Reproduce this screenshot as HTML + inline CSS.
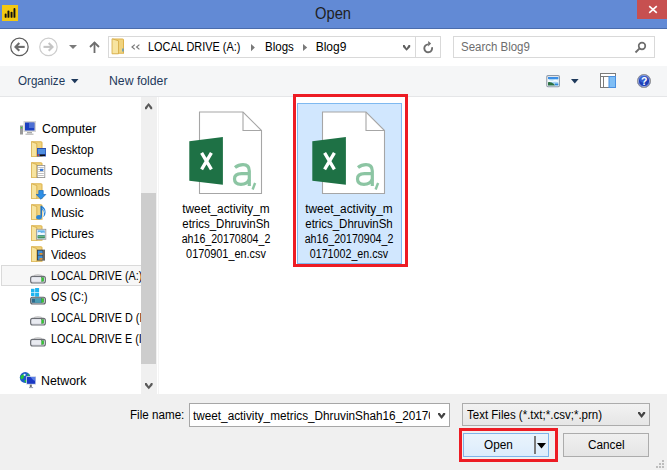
<!DOCTYPE html>
<html><head><meta charset="utf-8">
<style>
*{box-sizing:border-box;margin:0;padding:0}
html,body{width:667px;height:470px;overflow:hidden;background:#F0F0F0;font-family:"Liberation Sans",sans-serif;font-size:12px;color:#000}
.a{position:absolute}
.t{position:absolute;white-space:nowrap;line-height:14px}
svg{position:absolute;overflow:visible}
</style></head><body>
<div class="a" style="left:0;top:0;width:667px;height:29px;background:#628AD5;border-bottom:1px solid #4A6CAC"></div>
<div class="a" style="left:2px;top:5px;width:16px;height:16px;background:#F2C811"></div>
<svg style="left:2px;top:5px" width="16" height="16"><g fill="#111"><rect x="2.7" y="8.6" width="1.9" height="4.2" rx=".9"/><rect x="5.5" y="5.6" width="1.9" height="7.2" rx=".9"/><rect x="8.6" y="6.7" width="1.9" height="6.1" rx=".9"/><rect x="11.5" y="3" width="1.9" height="9.8" rx=".9"/></g></svg>
<div class="a" style="left:637px;top:0;width:30px;height:19px;background:#C75050"></div>
<svg style="left:637px;top:0" width="30" height="19"><g stroke="#fff" stroke-width="1.6"><line x1="12.2" y1="6.2" x2="19.8" y2="12.8"/><line x1="19.8" y1="6.2" x2="12.2" y2="12.8"/></g></svg>
<div class="t" style="left:314.8px;top:5.2px;color:#1f1f1f;font-size:15.6px;transform:scaleX(0.945);transform-origin:0 0;line-height:18px">Open</div>
<div class="a" style="left:0;top:29px;width:667px;height:37px;background:#fff"></div>
<svg style="left:10px;top:37px" width="20" height="20"><circle cx="9.45" cy="9.9" r="8.7" fill="none" stroke="#5d5d5d" stroke-width="1.2"/><g stroke="#6d6d6d" stroke-width="2.1" fill="none"><line x1="5.5" y1="9.9" x2="14.7" y2="9.9"/><polyline points="9.3,6.1 5.5,9.9 9.3,13.7"/></g></svg>
<svg style="left:39px;top:37px" width="20" height="20"><circle cx="9.45" cy="9.9" r="8.7" fill="none" stroke="#cdcdcd" stroke-width="1.2"/><g stroke="#c4c4c4" stroke-width="2.1" fill="none"><line x1="4.5" y1="9.9" x2="13.5" y2="9.9"/><polyline points="9.7,6.1 13.5,9.9 9.7,13.7"/></g></svg>
<svg style="left:69px;top:45px" width="8" height="4"><polygon points="0,0 8,0 4,4" fill="#7a7a7a"/></svg>
<svg style="left:89px;top:41px" width="11" height="12"><g stroke="#6d6d6d" stroke-width="1.8" fill="none"><line x1="5.5" y1="1.5" x2="5.5" y2="12"/><polyline points="1,6 5.5,1.5 10,6"/></g></svg>
<div class="a" style="left:108px;top:36px;width:333px;height:22px;border:1px solid #D9D9D9;background:#fff"></div>
<div class="a" style="left:415px;top:37px;width:1px;height:20px;background:#D9D9D9"></div>
<svg style="left:111px;top:37.5px" width="15" height="16"><path d="M1.5,0.5 L11.5,0.5 Q13,0.5 13,2 L13,15.8 L1.5,15.8Z" fill="#DDB24A"/><path d="M2.5,1.5 L12,1.5 L12,14.8 L2.5,14.8Z" fill="#F0D37E"/><path d="M1,0.8 L7.5,2.8 L7.5,15.8 L1,15.8Z" fill="#F7E4A0" stroke="#D3A843" stroke-width=".8"/><rect x="11.3" y="10.5" width="1.2" height="3" fill="#3A8FD6"/></svg>
<svg style="left:131px;top:44px" width="10" height="7"><g fill="none" stroke="#7a7a7a" stroke-width="1.2"><polyline points="3.8,0.6 1,3 3.8,5.4"/><polyline points="8.4,0.6 5.6,3 8.4,5.4"/></g></svg>
<svg style="left:251px;top:43.8px" width="5" height="8"><polygon points="0,0 3.9,3.6 0,7.2" fill="#7a7a7a"/></svg>
<svg style="left:302.7px;top:43.9px" width="5" height="8"><polygon points="0,0 4.2,3.55 0,7.1" fill="#7a7a7a"/></svg>
<svg style="left:403px;top:45.1px" width="8" height="7"><polygon points="0,0 1.6,0 3.6,3.3 5.6,0 7.2,0 7.2,1.9 3.6,5.8 0,1.9" fill="#606060"/></svg>
<svg style="left:418px;top:38px" width="20" height="18"><path d="M13.97,9.29 A3.9,3.9 0 1 1 10.2,6.4" fill="none" stroke="#6d6d6d" stroke-width="1.9"/><polygon points="10.2,2.9 13.1,5.6 10.2,8.5" fill="#6d6d6d"/></svg>
<div class="a" style="left:453px;top:36px;width:202px;height:22px;border:1px solid #D9D9D9;background:#fff"></div>
<svg style="left:634px;top:41px" width="13" height="13"><circle cx="8" cy="5" r="3.3" fill="none" stroke="#6d6d6d" stroke-width="1.7"/><line x1="5.6" y1="7.4" x2="1.5" y2="11.5" stroke="#6d6d6d" stroke-width="1.9"/></svg>
<div class="t" style="left:147.6px;top:40px;transform:scaleX(0.91);transform-origin:0 0">LOCAL DRIVE (A:)</div>
<div class="t" style="left:264.6px;top:40px;transform:scaleX(0.96);transform-origin:0 0">Blogs</div>
<div class="t" style="left:315.7px;top:40px">Blog9</div>
<div class="t" style="left:461px;top:40px;color:#6d6d6d;transform:scaleX(0.956);transform-origin:0 0">Search Blog9</div>
<div class="a" style="left:0;top:66px;width:667px;height:31px;background:#F5F6F7;border-bottom:1px solid #E5E6E8"></div>
<svg style="left:70.7px;top:78.9px" width="8" height="5"><polygon points="0,0 7.5,0 3.75,4.2" fill="#1E395B"/></svg>
<svg style="left:546px;top:75px" width="14" height="12"><rect x="0.8" y="0.6" width="12.6" height="11.2" rx="1.2" fill="#fff" stroke="#8d99a8" stroke-width="1.1"/><rect x="2" y="2" width="10.3" height="8.4" fill="#a8d4f4"/><rect x="2" y="2" width="10.3" height="2" fill="#3a8ee6"/><path d="M2,4 Q5,6.5 8,5 Q10,4.2 12.3,5.5 L12.3,7 Q8,6 2,8Z" fill="#f4fbff"/><path d="M2,10.4 L2,7.2 Q5,6.6 8,9 L9,10.4Z" fill="#2c7040"/><rect x="9" y="8.6" width="3.3" height="1.8" fill="#2e88d8"/></svg>
<svg style="left:570.7px;top:78.8px" width="8" height="5"><polygon points="0,0 7.6,0 3.8,4.4" fill="#1E395B"/></svg>
<svg style="left:600px;top:73px" width="16" height="15"><rect x="0.5" y="0.5" width="15" height="14" fill="#fff" stroke="#7b7b7b"/><line x1="0.5" y1="3.5" x2="15.5" y2="3.5" stroke="#7b7b7b"/><line x1="3.5" y1="3.5" x2="3.5" y2="14.5" stroke="#7b7b7b"/><rect x="9" y="3.5" width="6.5" height="11" fill="#7fbef5" stroke="#4a90e0"/></svg>
<svg style="left:637px;top:74px" width="14" height="14"><circle cx="7" cy="7" r="6.6" fill="#1d3fb8" stroke="#9a9a9a" stroke-width="1"/><circle cx="7" cy="7" r="5.6" fill="none" stroke="#e8e8e8" stroke-width=".6"/><circle cx="6" cy="5" r="3.4" fill="#4a7ee8" opacity=".55"/><text x="7.1" y="10.8" font-family="Liberation Sans" font-weight="bold" font-size="10.5" fill="#fff" text-anchor="middle">?</text></svg>
<div class="t" style="left:18.4px;top:74px;color:#1E395B;transform:scaleX(0.967);transform-origin:0 0">Organize</div>
<div class="t" style="left:109.2px;top:74px;color:#1E395B;transform:scaleX(1.02);transform-origin:0 0">New folder</div>
<div class="a" style="left:0;top:97px;width:667px;height:297px;background:#fff"></div>
<div class="a" style="left:141px;top:97px;width:16px;height:297px;background:#F0F0F0"></div>
<div class="a" style="left:141px;top:193px;width:15px;height:171px;background:#CDCDCD"></div>
<div class="a" style="left:158px;top:97px;width:1px;height:297px;background:#F4F4F4"></div>
<svg style="left:144.9px;top:102.8px" width="8" height="7"><polygon points="0,4.3 3.6,0 7.2,4.3 7.2,6.3 5.6,6.3 3.6,3 1.6,6.3 0,6.3" fill="#5a5a5a"/></svg>
<svg style="left:144.7px;top:382.9px" width="8" height="7"><polygon points="0,0 1.6,0 3.8,3.3 6,0 7.6,0 7.6,2 3.8,6.3 0,2" fill="#5a5a5a"/></svg>
<svg width="0" height="0" style="position:absolute"><defs>
<symbol id="fold" viewBox="0 0 16 16"><path d="M0.7,0.3 L10,0.3 Q11.5,0.3 11.5,1.8 L11.5,15.8 L0.7,15.8Z" fill="#DDB24A"/><path d="M1.7,1.3 L10.5,1.3 L10.5,14.8 L1.7,14.8Z" fill="#F0D37E"/><path d="M0.4,0.6 L5.8,2.6 L5.8,15.8 L0.4,15.8Z" fill="#F7E4A0" stroke="#D3A843" stroke-width=".8"/></symbol>
<symbol id="drive" viewBox="0 0 16 10"><path d="M3.2,2.6 Q4,0.6 8,0.6 Q12,0.6 12.8,2.6Z" fill="#f2f2f2" stroke="#b4b4b4" stroke-width=".7"/><rect x="0.6" y="2.4" width="14.8" height="6.6" rx="2" fill="#dcdee6" stroke="#6b6e74" stroke-width="1.1"/><rect x="2" y="3.6" width="9.5" height="3.6" fill="#e9ebf1"/><rect x="11.7" y="3.7" width="2" height="3.6" fill="#2ecf2e" stroke="#3a8a3a" stroke-width=".5"/></symbol>
<symbol id="xl" viewBox="0 0 76 86"><path d="M11.5,2 L55,2 L73.5,20.5 L73.5,83.5 L11.5,83.5Z" fill="#fff" stroke="#a6a6a6" stroke-width="1.1"/><path d="M55,2 L55,20.5 L73.5,20.5" fill="none" stroke="#a6a6a6" stroke-width="1.1"/><path d="M1.3,31.3 L34.9,26.9 L34.9,74.8 L1.3,70.8Z" fill="#1E7145"/><path d="M13.6,42.8 L23.4,59.4 M23.4,42.8 L13.6,59.4" stroke="#fff" stroke-width="3.3"/><g fill="none" stroke="#8CC5A3" stroke-width="3.2"><path d="M47,57.6 Q50.5,54.7 55,54.7 Q61.3,54.7 61.3,61 L61.3,75.9"/><path d="M61.3,63.7 L53.5,63.7 Q46.5,63.7 46.5,69 Q46.5,74.3 53,74.3 Q59,74.3 61.3,69.5"/></g><path d="M67.1,73 L64.6,79.5" stroke="#8CC5A3" stroke-width="2.4"/></symbol>
</defs></svg>
<div class="a" style="left:1px;top:265px;width:140px;height:21px;background:#F7F7F7;border:1px solid #DADADA;border-right:none"></div>
<div class="a" style="left:0;top:97px;width:141px;height:297px;overflow:hidden">
<svg style="left:20px;top:24px" width="16" height="14"><rect x="0" y="4.5" width="3" height="9" fill="#9a9a9a"/><rect x="0.8" y="6" width="1.4" height="1.4" fill="#3c3"/><rect x="3.5" y="0" width="12.5" height="11" fill="#d6d6d6"/><rect x="5" y="1.5" width="9.5" height="8" fill="#1a3fc0"/><rect x="9" y="2" width="5" height="5" fill="#6f8fe0" opacity=".6"/><rect x="7" y="11" width="5" height="1.5" fill="#aaa"/><rect x="5.5" y="12.5" width="8" height="1.5" fill="#c4c4c4"/></svg>
<svg style="left:31px;top:44px" width="16" height="16"><use href="#fold"/><g transform="translate(-1 0)"><rect x="7" y="7" width="9" height="8.5" fill="#2a4fb0"/><rect x="7.8" y="8" width="7.5" height="5" fill="#4f8ee0"/><rect x="10" y="13.6" width="5" height="1.4" fill="#111"/><rect x="7.5" y="13.3" width="1.6" height="1.6" fill="#e05020"/></g></svg>
<svg style="left:31px;top:65px" width="16" height="16"><use href="#fold"/><g transform="translate(-1 0)"><rect x="7.2" y="3.4" width="7.6" height="12.2" fill="#fff" stroke="#8c8c8c" stroke-width=".8"/><g stroke="#b0b0b0" stroke-width=".8"><line x1="8.2" y1="5.5" x2="13.8" y2="5.5"/><line x1="8.2" y1="7.5" x2="13.8" y2="7.5"/><line x1="8.2" y1="9.5" x2="13.8" y2="9.5"/><line x1="8.2" y1="11.5" x2="13.8" y2="11.5"/><line x1="8.2" y1="13.5" x2="13.8" y2="13.5"/></g><rect x="10" y="6.8" width="3.2" height="2.2" fill="#3a7ad8"/></g></svg>
<svg style="left:31px;top:86px" width="16" height="16"><use href="#fold"/><g transform="translate(-1 0)"><path d="M8.8,7.5 L13.2,7.5 L13.2,11.5 L15.8,11.5 L11,16.3 L6.2,11.5 L8.8,11.5Z" fill="#2E8FE6" stroke="#1766b8" stroke-width=".7"/></g></svg>
<svg style="left:31px;top:107px" width="16" height="16"><use href="#fold"/><path d="M10.2,1.8 Q14.6,3.6 14.6,8.2 Q14.6,11.2 12.6,13 L12.3,12.6 Q13.2,10.5 12.8,8.5 Q12.3,6.5 10.9,5.8 L10.9,13" fill="#2a86d8"/><path d="M10.2,1.8 L10.2,13" stroke="#1f6fc0" stroke-width="1.5"/><ellipse cx="8" cy="13.2" rx="2.8" ry="2.2" fill="#2a86d8"/><path d="M11.6,4.6 Q13.3,6 13.3,8.5" stroke="#e8f4ff" stroke-width=".8" fill="none"/></svg>
<svg style="left:31px;top:128px" width="16" height="16"><use href="#fold"/><g transform="translate(-1 0)"><rect x="6.6" y="4.3" width="9.2" height="10" fill="#fff" stroke="#9a9a9a" stroke-width=".9"/><rect x="7.6" y="5.3" width="7.2" height="8" fill="#62b2ea"/><path d="M7.6,7.5 Q10,6.5 11.5,8 Q13,7 14.8,8 L14.8,10 L7.6,10Z" fill="#eef8ff"/><rect x="7.6" y="10.4" width="7.2" height="2.9" fill="#3d8a55"/><rect x="7.6" y="11.4" width="7.2" height=".7" fill="#8ccfa0"/></g></svg>
<svg style="left:31px;top:149px" width="16" height="16"><use href="#fold"/><g transform="translate(-1 0)"><rect x="7" y="3.7" width="8" height="10.8" fill="#3b3b3b"/><rect x="7.8" y="4.6" width="4.8" height="4.3" fill="#3d8fd8"/><rect x="7.8" y="9.5" width="4.8" height="4.3" fill="#3d8fd8"/><rect x="9.5" y="7" width="3" height="1.8" fill="#e09030"/><rect x="9.5" y="12" width="3" height="1.8" fill="#e09030"/><g fill="#e8e8e8"><rect x="13.5" y="4.5" width="1" height="1"/><rect x="13.5" y="6.5" width="1" height="1"/><rect x="13.5" y="8.5" width="1" height="1"/><rect x="13.5" y="10.5" width="1" height="1"/><rect x="13.5" y="12.5" width="1" height="1"/></g></g></svg>
<svg style="left:30px;top:177px" width="16" height="10"><use href="#drive"/></svg>
<svg style="left:31px;top:191px" width="8" height="9"><g fill="#1EB4F0"><rect x="0" y="0.8" width="3.5" height="3.4"/><rect x="4.1" y="0" width="4" height="4.1"/><rect x="0" y="4.7" width="3.5" height="3.4"/><rect x="4.1" y="4.7" width="4" height="4"/></g></svg>
<svg style="left:30px;top:198px" width="16" height="10"><rect x="0.6" y="2.2" width="14.8" height="6.8" rx="2" fill="#d0d4da" stroke="#5f6368" stroke-width="1.1"/><rect x="1.6" y="3.4" width="10" height="4.4" fill="#2d6b8c"/><rect x="5" y="3.4" width="6.5" height="4.4" fill="#4b9cb4"/><rect x="11.7" y="3.6" width="2" height="3.8" fill="#2ecf2e" stroke="#3a8a3a" stroke-width=".5"/></svg>
<svg style="left:30px;top:219.3px" width="16" height="10"><use href="#drive"/></svg>
<svg style="left:30px;top:240.3px" width="16" height="10"><use href="#drive"/></svg>
<svg style="left:20px;top:275px" width="17" height="17"><circle cx="5.2" cy="5.5" r="5.4" fill="#1f5cc8"/><path d="M0.6,4 Q2,2 4,2.5 Q4.5,4.5 3,6.5 Q1.5,8 0.5,6.5Z" fill="#22c43a"/><path d="M4.5,8 Q6.5,7.5 8,9 Q7,10.8 5,10.6Z" fill="#22c43a"/><path d="M7.5,1.5 Q9.5,2.5 10,4.5 Q8.5,4.5 7.5,3Z" fill="#22c43a"/><circle cx="4.6" cy="2.8" r="1.1" fill="#e8f4ff"/><rect x="6.2" y="4.2" width="9.8" height="8.4" fill="#c9d3e6"/><rect x="7" y="5" width="8.2" height="6.8" fill="#1a38c4"/><path d="M10.5,5 L15.2,5 L15.2,9 Q12.5,8 10.5,5Z" fill="#5a7ee6"/><rect x="9.8" y="12.6" width="2" height="2.4" fill="#707070"/><rect x="9" y="15" width="4.1" height="1.1" fill="#9aa4b8"/></svg>
<div class="t" style="left:41.6px;top:24.6px;transform:scaleX(1.03);transform-origin:0 0">Computer</div>
<div class="t" style="left:50.6px;top:45.8px;transform:scaleX(0.97);transform-origin:0 0">Desktop</div>
<div class="t" style="left:50.6px;top:66.8px;transform:scaleX(1.015);transform-origin:0 0">Documents</div>
<div class="t" style="left:50.6px;top:87.8px">Downloads</div>
<div class="t" style="left:50.6px;top:108.8px;transform:scaleX(1.05);transform-origin:0 0">Music</div>
<div class="t" style="left:50.6px;top:129.8px;transform:scaleX(0.99);transform-origin:0 0">Pictures</div>
<div class="t" style="left:50.6px;top:150.8px;transform:scaleX(0.96);transform-origin:0 0">Videos</div>
<div class="t" style="left:50.6px;top:171.8px;transform:scaleX(0.9);transform-origin:0 0">LOCAL DRIVE (A:)</div>
<div class="t" style="left:50.6px;top:192.8px;transform:scaleX(0.9);transform-origin:0 0">OS (C:)</div>
<div class="t" style="left:50.6px;top:213.8px;transform:scaleX(0.9);transform-origin:0 0">LOCAL DRIVE D (H:)</div>
<div class="t" style="left:50.6px;top:234.8px;transform:scaleX(0.9);transform-origin:0 0">LOCAL DRIVE E (I:)</div>
<div class="t" style="left:40.8px;top:277px;transform:scaleX(1.03);transform-origin:0 0">Network</div>
</div>
<svg style="left:188px;top:110px" width="76" height="86"><use href="#xl"/></svg>
<div class="a" style="left:297px;top:103px;width:105px;height:161px;background:#D1E7FE;border:1px solid #7EB9F0"></div>
<svg style="left:311px;top:110px" width="76" height="86"><use href="#xl"/></svg>
<div class="a" style="left:293px;top:94px;width:115px;height:173px;border:3px solid #ED1C24"></div>
<div class="t" style="left:76px;top:202px;width:300px;text-align:center;transform:scaleX(0.986);transform-origin:150px 0">tweet_activity_m</div>
<div class="t" style="left:76px;top:217px;width:300px;text-align:center;transform:scaleX(0.957);transform-origin:150px 0">etrics_DhruvinSh</div>
<div class="t" style="left:76px;top:232px;width:300px;text-align:center;transform:scaleX(0.886);transform-origin:150px 0">ah16_20170804_2</div>
<div class="t" style="left:76px;top:247px;width:300px;text-align:center;transform:scaleX(0.906);transform-origin:150px 0">0170901_en.csv</div>
<div class="t" style="left:199px;top:202px;width:300px;text-align:center;transform:scaleX(0.986);transform-origin:150px 0">tweet_activity_m</div>
<div class="t" style="left:199px;top:217px;width:300px;text-align:center;transform:scaleX(0.957);transform-origin:150px 0">etrics_DhruvinSh</div>
<div class="t" style="left:199px;top:232px;width:300px;text-align:center;transform:scaleX(0.886);transform-origin:150px 0">ah16_20170904_2</div>
<div class="t" style="left:199px;top:247px;width:300px;text-align:center;transform:scaleX(0.89);transform-origin:150px 0">0171002_en.csv</div>
<div class="a" style="left:189px;top:403px;width:261px;height:24px;background:#fff;border:1px solid #A7A7A7"></div>
<svg style="left:438px;top:412.8px" width="8" height="6"><polygon points="0,0 1.9,0 3.6,2.6 5.3,0 7.2,0 7.2,1.6 3.6,6 0,1.6" fill="#444"/></svg>
<div class="a" style="left:462px;top:403px;width:188px;height:23px;background:linear-gradient(#F2F2F2,#E6E6E6);border:1px solid #ACACAC"></div>
<svg style="left:637.9px;top:411.8px" width="8" height="6"><polygon points="0,0 1.9,0 3.6,2.6 5.3,0 7.2,0 7.2,1.6 3.6,6 0,1.6" fill="#444"/></svg>
<div class="a" style="left:463px;top:433px;width:86px;height:24px;background:linear-gradient(#EAF4FC,#DCECFC);border:1px solid #7EB4EA"></div>
<div class="a" style="left:534px;top:436px;width:2px;height:18px;background:#7a7a7a"></div>
<svg style="left:537px;top:442.8px" width="9" height="6"><polygon points="0,0 9,0 4.5,5.4" fill="#000"/></svg>
<div class="a" style="left:459px;top:428px;width:99px;height:34px;border:3px solid #ED1C24"></div>
<div class="a" style="left:563px;top:433px;width:86px;height:24px;background:linear-gradient(#F0F0F0,#E5E5E5);border:1px solid #ACACAC"></div>
<svg style="left:653px;top:457px" width="13" height="13"><g fill="#bdbdbd"><rect x="9" y="3" width="2" height="2"/><rect x="6" y="6" width="2" height="2"/><rect x="9" y="6" width="2" height="2"/><rect x="3" y="9" width="2" height="2"/><rect x="6" y="9" width="2" height="2"/><rect x="9" y="9" width="2" height="2"/></g></svg>
<div class="t" style="left:129.5px;top:408px;transform:scaleX(0.97);transform-origin:0 0">File name:</div>
<div class="a" style="left:190px;top:404px;width:240px;height:22px;overflow:hidden"><div class="t" style="left:3px;top:4.7px;transform:scaleX(0.98);transform-origin:0 0">tweet_activity_metrics_DhruvinShah16_20170904_20171002_en.csv</div>
</div>
<div class="t" style="left:467.3px;top:408px;transform:scaleX(0.96);transform-origin:0 0">Text Files (*.txt;*.csv;*.prn)</div>
<div class="t" style="left:484px;top:438px;transform:scaleX(0.98);transform-origin:0 0">Open</div>
<div class="t" style="left:587.6px;top:438px;transform:scaleX(0.98);transform-origin:0 0">Cancel</div>
</body></html>
